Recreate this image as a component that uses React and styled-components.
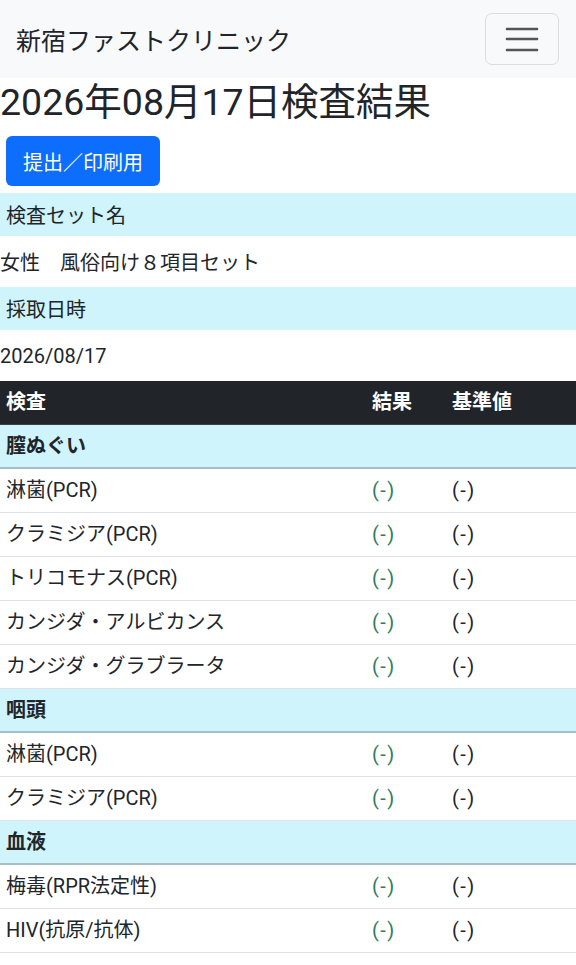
import React from "react";
import styled, { createGlobalStyle } from "styled-components";

const GlobalStyle = createGlobalStyle`
  body {
    margin: 0;
    background: #fff;
    color: #212529;
    font-family: "Roboto", "Noto Sans CJK JP", sans-serif;
    font-size: 20px;
  }
`;

const Navbar = styled.nav`
  height: 78px;
  padding: 0 16px 0 16px;
  display: flex;
  align-items: center;
  justify-content: space-between;
  background: #f8f9fa;
`;

const Brand = styled.span`
  font-size: 25px;
  color: #212529;
`;

const Toggler = styled.button`
  width: 74px;
  height: 52px;
  margin-right: 1px;
  display: flex;
  align-items: center;
  justify-content: center;
  background: transparent;
  border: 1px solid #dcdcdc;
  border-radius: 7px;
  padding: 0;
`;

const Title = styled.h2`
  margin: 2px 0 0;
  font-size: 37.5px;
  line-height: 44px;
  font-weight: 400;
`;

const PrintButton = styled.button`
  margin: 12px 0 7px 6px;
  height: 50px;
  width: 154px;
  padding: 0;
  background: #0d6efd;
  color: #fff;
  border: none;
  border-radius: 6px;
  font-family: inherit;
  font-size: 20px;
`;

const InfoLabel = styled.div`
  height: 43px;
  padding: 0 6px;
  display: flex;
  align-items: center;
  background: #cff4fc;
`;

const InfoValue = styled.div`
  height: 51px;
  display: flex;
  align-items: center;
`;

const Table = styled.table`
  width: 100%;
  border-collapse: collapse;
  table-layout: fixed;
`;

const HeadCell = styled.th`
  width: ${(p) => p.$w || "auto"};
  padding: 8px 6px;
  line-height: 27px;
  text-align: left;
  font-weight: 700;
  color: #fff;
  background: #212529;
  border-bottom: 1px solid #3a4147;
`;

const GroupCell = styled.td`
  padding: 8px 6px;
  line-height: 26px;
  font-weight: 700;
  background: #cff4fc;
  border-bottom: 2px solid #a9bec4;
`;

const Cell = styled.td`
  padding: 8px 6px;
  line-height: 27px;
  border-bottom: 1px solid #dee2e6;
  color: ${(p) => (p.$ok ? "#2f7d5c" : "#212529")};
  letter-spacing: ${(p) => (p.$mark ? "1.5px" : "normal")};
  white-space: nowrap;
`;

function MenuIcon() {
  return (
    <svg width="34" height="26" viewBox="0 0 34 26">
      <g stroke="#555" strokeWidth="2.6" strokeLinecap="round">
        <line x1="2" y1="3" x2="32" y2="3" />
        <line x1="2" y1="13" x2="32" y2="13" />
        <line x1="2" y1="24" x2="32" y2="24" />
      </g>
    </svg>
  );
}

const groups = [
  {
    name: "膣ぬぐい",
    items: [
      "淋菌(PCR)",
      "クラミジア(PCR)",
      "トリコモナス(PCR)",
      "カンジダ・アルビカンス",
      "カンジダ・グラブラータ",
    ],
  },
  { name: "咽頭", items: ["淋菌(PCR)", "クラミジア(PCR)"] },
  { name: "血液", items: ["梅毒(RPR法定性)", "HIV(抗原/抗体)"] },
];

export default function App() {
  return (
    <>
      <GlobalStyle />
      <Navbar>
        <Brand>新宿ファストクリニック</Brand>
        <Toggler aria-label="menu">
          <MenuIcon />
        </Toggler>
      </Navbar>
      <Title>2026年08月17日検査結果</Title>
      <PrintButton>提出／印刷用</PrintButton>
      <InfoLabel>検査セット名</InfoLabel>
      <InfoValue>女性　風俗向け８項目セット</InfoValue>
      <InfoLabel>採取日時</InfoLabel>
      <InfoValue>2026/08/17</InfoValue>
      <Table>
        <thead>
          <tr>
            <HeadCell $w="354px">検査</HeadCell>
            <HeadCell $w="68px">結果</HeadCell>
            <HeadCell>基準値</HeadCell>
          </tr>
        </thead>
        <tbody>
          {groups.map((g) => (
            <React.Fragment key={g.name}>
              <tr>
                <GroupCell colSpan={3}>{g.name}</GroupCell>
              </tr>
              {g.items.map((item) => (
                <tr key={g.name + item}>
                  <Cell>{item}</Cell>
                  <Cell $ok $mark>(-)</Cell>
                  <Cell $mark>(-)</Cell>
                </tr>
              ))}
            </React.Fragment>
          ))}
        </tbody>
      </Table>
    </>
  );
}
